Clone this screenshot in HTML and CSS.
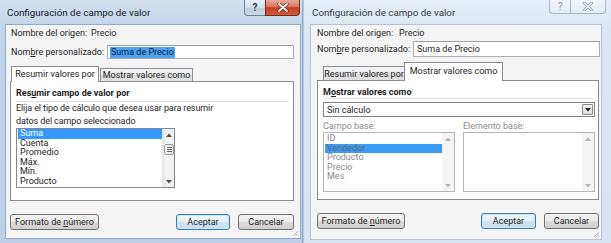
FILE: index.html
```html
<!DOCTYPE html>
<html>
<head>
<meta charset="utf-8">
<link rel="stylesheet" href="styles.css">
</head>
<body>
<div class="screen">
  <div class="dlg dlg-a">
    <div class="titlebar">
      <span class="title">Configuración de campo de valor</span>
      <div class="caps">
        <span class="cap help">?</span>
        <span class="cap close"><svg width="12" height="9" viewBox="0 0 12 9"><path d="M2 1 L10 8 M10 1 L2 8" stroke="#5a2418" stroke-width="3.2" stroke-linecap="round"/><path d="M2 1 L10 8 M10 1 L2 8" stroke="#ffffff" stroke-width="1.8" stroke-linecap="round"/></svg></span>
      </div>
    </div>
    <div class="client">
      <div class="row r1"><span class="lbl l1">Nombre del origen:</span><span class="val">Precio</span></div>
      <div class="row r2"><span class="lbl l2">Nom<u>b</u>re personalizado:</span><div class="edit"><span class="seltext">Suma de Precio</span></div></div>
      <div class="tabs">
        <div class="tab on">Resumir valores por</div>
        <div class="tab off">Mostrar valores como</div>
      </div>
      <div class="panel">
        <div class="head">Res<u>u</u>mir campo de valor por</div>
        <div class="sep"></div>
        <div class="desc">Elija el tipo de cálculo que desea usar para resumir<br>datos del campo seleccionado</div>
        <div class="list list-a">
          <div class="items">
            <div class="item sel">Suma</div>
            <div class="item">Cuenta</div>
            <div class="item">Promedio</div>
            <div class="item">Máx.</div>
            <div class="item">Mín.</div>
            <div class="item">Producto</div>
          </div>
          <div class="sb">
            <div class="sbbtn"><svg width="6" height="4" viewBox="0 0 6 4"><path d="M0 4 L3 0.5 L6 4 Z" fill="#4d4d4d"/></svg></div>
            <div class="thumb"><svg width="5" height="5" viewBox="0 0 5 5"><path d="M0 0.5H5M0 2.5H5M0 4.5H5" stroke="#6f6f6f" stroke-width="1"/></svg></div>
            <div class="sbfill"></div>
            <div class="sbbtn"><svg width="6" height="4" viewBox="0 0 6 4"><path d="M0 0 L3 3.5 L6 0 Z" fill="#4d4d4d"/></svg></div>
          </div>
        </div>
      </div>
      <div class="buttons">
        <div class="btn fmt"><span>Formato de <u>n</u>úmero</span></div>
        <div class="spacer"></div>
        <div class="btn ok"><span>Aceptar</span></div>
        <div class="btn cancel"><span>Cancelar</span></div>
      </div>
      <svg class="grip" width="7" height="7" viewBox="0 0 7 7"><path d="M6 1 L1 6 M6 3.5 L3.5 6 M6 5.5 L5.5 6" stroke="#9aa6b3" stroke-width="0.8"/></svg>
    </div>
  </div>

  <div class="dlg dlg-b">
    <div class="titlebar">
      <span class="title">Configuración de campo de valor</span>
      <div class="caps">
        <span class="cap help">?</span>
        <span class="cap close"><svg width="12" height="9" viewBox="0 0 12 9"><path d="M2.5 1 L9.5 8 M9.5 1 L2.5 8" stroke="#8a949f" stroke-width="2.6" stroke-linecap="round"/><path d="M2.5 1 L9.5 8 M9.5 1 L2.5 8" stroke="#f4f7fa" stroke-width="1.2" stroke-linecap="round"/></svg></span>
      </div>
    </div>
    <div class="client">
      <div class="row r1"><span class="lbl l1">Nombre del origen:</span><span class="val">Precio</span></div>
      <div class="row r2"><span class="lbl l2">Nom<u>b</u>re personalizado:</span><div class="edit"><span class="plain">Suma de Precio</span></div></div>
      <div class="tabs">
        <div class="tab off">Resumir valores por</div>
        <div class="tab on">Mostrar valores como</div>
      </div>
      <div class="panel">
        <div class="head">M<u>o</u>strar valores como</div>
        <div class="sep"></div>
        <div class="combo"><span class="combotext">Sin cálculo</span><span class="combobtn"><svg width="6" height="4" viewBox="0 0 6 4"><path d="M0 0 L3 3.5 L6 0 Z" fill="#1a1a1a"/></svg></span></div>
        <div class="bases">
          <div class="basecol">
            <div class="dis-lbl">Campo base:</div>
            <div class="list list-b">
              <div class="items">
                <div class="item">ID</div>
                <div class="item sel">Vendedor</div>
                <div class="item">Producto</div>
                <div class="item">Precio</div>
                <div class="item">Mes</div>
              </div>
              <div class="sb dis">
                <div class="sbbtn"><svg width="6" height="4" viewBox="0 0 6 4"><path d="M0 4 L3 0.5 L6 4 Z" fill="#b4b4b4"/></svg></div>
                <div class="sbfill"></div>
                <div class="sbbtn"><svg width="6" height="4" viewBox="0 0 6 4"><path d="M0 0 L3 3.5 L6 0 Z" fill="#b4b4b4"/></svg></div>
              </div>
            </div>
          </div>
          <div class="basecol">
            <div class="dis-lbl">Elemento base:</div>
            <div class="list list-b">
              <div class="items"></div>
              <div class="sb dis">
                <div class="sbbtn"><svg width="6" height="4" viewBox="0 0 6 4"><path d="M0 4 L3 0.5 L6 4 Z" fill="#b4b4b4"/></svg></div>
                <div class="sbfill"></div>
                <div class="sbbtn"><svg width="6" height="4" viewBox="0 0 6 4"><path d="M0 0 L3 3.5 L6 0 Z" fill="#b4b4b4"/></svg></div>
              </div>
            </div>
          </div>
        </div>
      </div>
      <div class="buttons">
        <div class="btn fmt"><span>Formato de <u>n</u>úmero</span></div>
        <div class="spacer"></div>
        <div class="btn ok"><span>Aceptar</span></div>
        <div class="btn cancel"><span>Cancelar</span></div>
      </div>
      <svg class="grip" width="7" height="7" viewBox="0 0 7 7"><path d="M6 1 L1 6 M6 3.5 L3.5 6 M6 5.5 L5.5 6" stroke="#9aa6b3" stroke-width="0.8"/></svg>
    </div>
  </div>
</div>
</body>
</html>
```

FILE: styles.css
```css
* { box-sizing: border-box; margin: 0; padding: 0; }
html, body { margin: 0; width: 611px; height: 243px; overflow: hidden; background: #ffffff; }
body { font-family: Roboto, "Noto Sans", "Liberation Sans", sans-serif; font-size: 9px; color: #1e1e1e; }
u { text-decoration: underline; text-underline-offset: 1px; }

.screen { display: flex; height: 243px; }

.dlg { display: flex; flex-direction: column; height: 243px; }
.dlg-a {
  width: 303px;
  padding: 0 1px 4px 5px;
  background: linear-gradient(180deg, #d3e1f0 0%, #c0d3e9 12%, #bccfe6 100%);
  border-right: 1px solid #8aa8cc;
}
.dlg-b {
  width: 308px;
  padding: 0 9px 3px 5px;
  background: linear-gradient(180deg, #e6eef7 0%, #dbe6f2 12%, #d9e4f0 100%);
  border-left: 1px solid #b9c9db;
}

.titlebar { height: 24px; display: flex; justify-content: space-between; align-items: flex-start; flex: none; }
.title { font-size: 9.8px; line-height: 12px; padding-top: 7px; color: #16202e; }
.dlg-a .title { margin-left: 2px; }
.dlg-b .title { margin-left: 3px; color: #2e3a4a; }

.caps { display: flex; }
.cap { display: flex; align-items: center; justify-content: center; }
.dlg-a .caps { margin-right: 1px; }
.dlg-a .cap { height: 16px; }
.dlg-a .help {
  width: 21px; border: 1px solid #6f829c; border-top: none; border-right: none;
  border-radius: 0 0 0 4px;
  background: linear-gradient(180deg, #e7eef7 0%, #d3deeb 50%, #bccbdf 51%, #c9d7e8 100%);
  font-weight: bold; font-size: 10px; color: #2c3a4e;
}
.dlg-a .close {
  width: 35px; border: 1px solid #6a2d22; border-top: none;
  border-radius: 0 0 4px 0;
  background: linear-gradient(180deg, #e9a99b 0%, #d9755f 45%, #c43e22 52%, #d4593c 100%);
}
.dlg-b .caps { margin-right: -4px; }
.dlg-b .cap { height: 14px; }
.dlg-b .help {
  width: 21px; border: 1px solid #a9b6c6; border-top: none; border-right: none;
  border-radius: 0 0 0 4px;
  background: linear-gradient(180deg, #f2f6fa, #e3ebf4);
  font-size: 10px; color: #8c96a1;
}
.dlg-b .close {
  width: 36px; border: 1px solid #a9b6c6; border-top: none;
  border-radius: 0 0 4px 0;
  background: linear-gradient(180deg, #f2f6fa, #e3ebf4);
}

.client {
  flex: 1; position: relative;
  background: #f4f4f4;
  border: 1px solid #95a9c1;
  display: flex; flex-direction: column;
}
.dlg-a .client { padding: 0 6px 0 4px; }
.dlg-b .client { padding: 0 1px 0 6px; border-color: #b5c3d3; margin-left: 1px; }

.row { display: flex; align-items: center; height: 13px; line-height: 13px; }
.dlg-a .row { padding-left: 1px; }
.r1 { margin-top: 2px; }
.dlg-a .r2 { margin-top: 5px; height: 14px; }
.dlg-b .r2 { margin-top: 1px; height: 16px; }
.lbl { display: inline-block; white-space: nowrap; }
.l1 { width: 80px; }
.dlg-b .l1 { width: 82px; }
.l2 { width: 96px; }
.edit {
  flex: 1; height: 100%;
  border: 1px solid #abadb3; border-top-color: #9ca0a8;
  background: #ffffff;
  display: flex; align-items: center; padding-left: 2px;
}
.seltext { background: #4aa2f4; color: #0e1c36; line-height: 11px; padding: 0 1px; }
.plain { padding-left: 1px; }

.tabs { display: flex; align-items: flex-end; position: relative; z-index: 1; margin-bottom: -1px; }
.dlg-a .tabs { margin-top: 7px; height: 16px; padding-left: 1px; }
.dlg-b .tabs { margin-top: 5px; height: 19px; padding-left: 6px; }
.tab {
  border: 1px solid #898c95; border-bottom: none;
  display: flex; align-items: center; justify-content: center;
  white-space: nowrap;
}
.tab.on { background: #ffffff; }
.tab.off { background: linear-gradient(180deg, #f4f4f4 0%, #ebebeb 50%, #dddddd 51%, #e2e2e2 100%); }
.dlg-a .tab.on { width: 88px; height: 16px; padding-bottom: 1px; }
.dlg-a .tab.off { width: 93px; height: 13px; margin-left: 1px; margin-bottom: 1px; }
.dlg-b .tab.off { width: 81px; height: 14px; margin-bottom: 1px; border-right: none; }
.dlg-b .tab.on { width: 99px; height: 19px; padding-bottom: 2px; }

.panel { background: #ffffff; border: 1px solid #898c95; height: 120px; flex: none; }
.dlg-a .panel { padding: 5px 4px 0 5px; }
.dlg-b .panel { padding: 5px 4px 0 5px; margin-right: 1px; }

.head { font-weight: bold; line-height: 12px; height: 12px; }
.sep { height: 1px; background: #dde3ea; }
.dlg-a .sep { margin-top: 2px; }
.dlg-b .sep { margin-top: 0; }
.desc { line-height: 13px; height: 26px; letter-spacing: -0.1px; }

.list { display: flex; height: 60px; background: #ffffff; border: 1px solid #828790; }
.list-a { width: 159px; }
.items { flex: 1; padding: 0 0 0 1px; }
.list-a .item { height: 9.6px; line-height: 9.6px; padding-left: 2px; white-space: nowrap; }
.item.sel { background: #3399ff; color: #ffffff; }
.list-b { border-color: #b3b6bc; }
.list-b .items { padding-top: 1.2px; }
.list-b .item { height: 9.5px; line-height: 9.5px; padding-left: 2px; color: #8a8a8a; }
.list-b .item.sel { background: #3a9bf5; color: #5e6a7c; }

.sb { width: 12px; display: flex; flex-direction: column; background: linear-gradient(90deg, #e8e8e8, #f4f4f4 40%, #eeeeee); border-left: 1px solid #e6e6e6; }
.sbbtn { height: 11px; display: flex; align-items: center; justify-content: center; }
.thumb {
  height: 11px; margin: 4px 0 0 1px; width: 10px;
  border: 1px solid #9c9c9c; border-radius: 2px;
  background: linear-gradient(90deg, #f3f3f3, #e2e2e2);
  display: flex; align-items: center; justify-content: center;
}
.sbfill { flex: 1; }
.sb.dis { background: #f4f4f4; border-left: none; }

.combo {
  margin-top: 3px; height: 15px; width: 272px;
  border: 1px solid #838383; background: #ffffff;
  display: flex; align-items: center; justify-content: space-between;
}
.combotext { padding-left: 3px; }
.combobtn {
  width: 11px; height: 11px; margin-right: 1px;
  border: 1px solid #8a8a8a; border-radius: 1px;
  background: linear-gradient(180deg, #f4f4f4, #dcdcdc);
  display: flex; align-items: center; justify-content: center;
}
.bases { display: grid; grid-template-columns: 132px 132px; column-gap: 8px; margin-top: 3px; }
.dis-lbl { line-height: 12px; height: 12px; color: #8d8d8d; }

.buttons { display: flex; height: 16px; margin-top: 13px; flex: none; }
.btn {
  height: 16px; border: 1px solid #707070; border-radius: 3px;
  background: linear-gradient(180deg, #f2f2f2 0%, #ebebeb 50%, #dddddd 51%, #cfcfcf 100%);
  display: flex; align-items: center; justify-content: center; white-space: nowrap;
}
.btn.ok { border-color: #3c7fb1; background: linear-gradient(180deg, #f1f7fc 0%, #e4eff8 50%, #d3e5f3 51%, #c8def0 100%); box-shadow: inset 0 0 0 1px #c4e5f6; }
.spacer { flex: 1; }
.dlg-a .fmt { width: 89px; }
.dlg-a .ok { width: 54px; margin-right: 8px; }
.dlg-a .cancel { width: 56px; }
.dlg-b .fmt { width: 88px; }
.dlg-b .ok { width: 55px; margin-right: 8px; }
.dlg-b .cancel { width: 55px; margin-right: 1px; }
.dlg-b .buttons { margin-top: 13px; }

.grip { position: absolute; right: 1px; bottom: 1px; }
```
